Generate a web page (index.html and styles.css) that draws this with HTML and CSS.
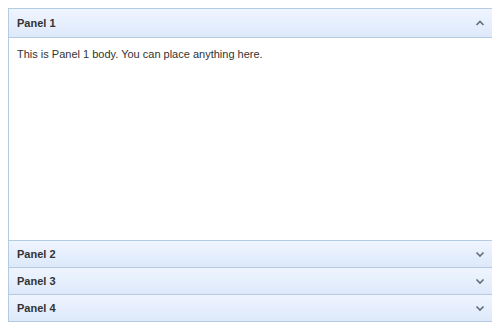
FILE: index.html
```html
<!DOCTYPE html>
<html lang="en">
  <head>
    <meta charset="UTF-8" />
    <title>Accordion</title>
    <link rel="stylesheet" href="styles.css">
  </head>
  <body>
    <div class="accordion">
      <div class="panel open">
        <div class="panel-header">
          <span class="panel-title">Panel 1</span>
          <svg class="tool" width="16" height="16" viewBox="0 0 16 16"><path d="M4.5 10 L8 6.5 L11.5 10" /></svg>
        </div>
        <div class="panel-body">This is Panel 1 body. You can place anything here.</div>
      </div>
      <div class="panel">
        <div class="panel-header">
          <span class="panel-title">Panel 2</span>
          <svg class="tool" width="16" height="16" viewBox="0 0 16 16"><path d="M4.5 6.5 L8 10 L11.5 6.5" /></svg>
        </div>
      </div>
      <div class="panel">
        <div class="panel-header">
          <span class="panel-title">Panel 3</span>
          <svg class="tool" width="16" height="16" viewBox="0 0 16 16"><path d="M4.5 6.5 L8 10 L11.5 6.5" /></svg>
        </div>
      </div>
      <div class="panel">
        <div class="panel-header">
          <span class="panel-title">Panel 4</span>
          <svg class="tool" width="16" height="16" viewBox="0 0 16 16"><path d="M4.5 6.5 L8 10 L11.5 6.5" /></svg>
        </div>
      </div>
    </div>
  </body>
</html>
```

FILE: styles.css
```css
body {
  margin: 8px;
  font-family: "Liberation Sans", Arial, sans-serif;
  font-size: 11px;
  color: #333;
  background: #fff;
}

.accordion {
  width: 485px;
  border: 1px solid #b4cbe2;
}

.panel + .panel .panel-header {
  border-top: 1px solid #b4cbe2;
}

.panel-header {
  display: flex;
  align-items: center;
  justify-content: space-between;
  height: 26px;
  padding: 0 8px;
  background: linear-gradient(to bottom, #eff5ff 0%, #dde9fa 100%);
}

.panel.open .panel-header {
  height: 28px;
  border-bottom: 1px solid #b4cbe2;
}

.panel-title {
  font-weight: bold;
  color: #333;
}

.tool {
  margin-right: -2px;
}

.tool path {
  fill: none;
  stroke: #66707a;
  stroke-width: 1.7;
}

.panel-body {
  height: 182px;
  padding: 10px 8px;
  background: #fff;
}
```
